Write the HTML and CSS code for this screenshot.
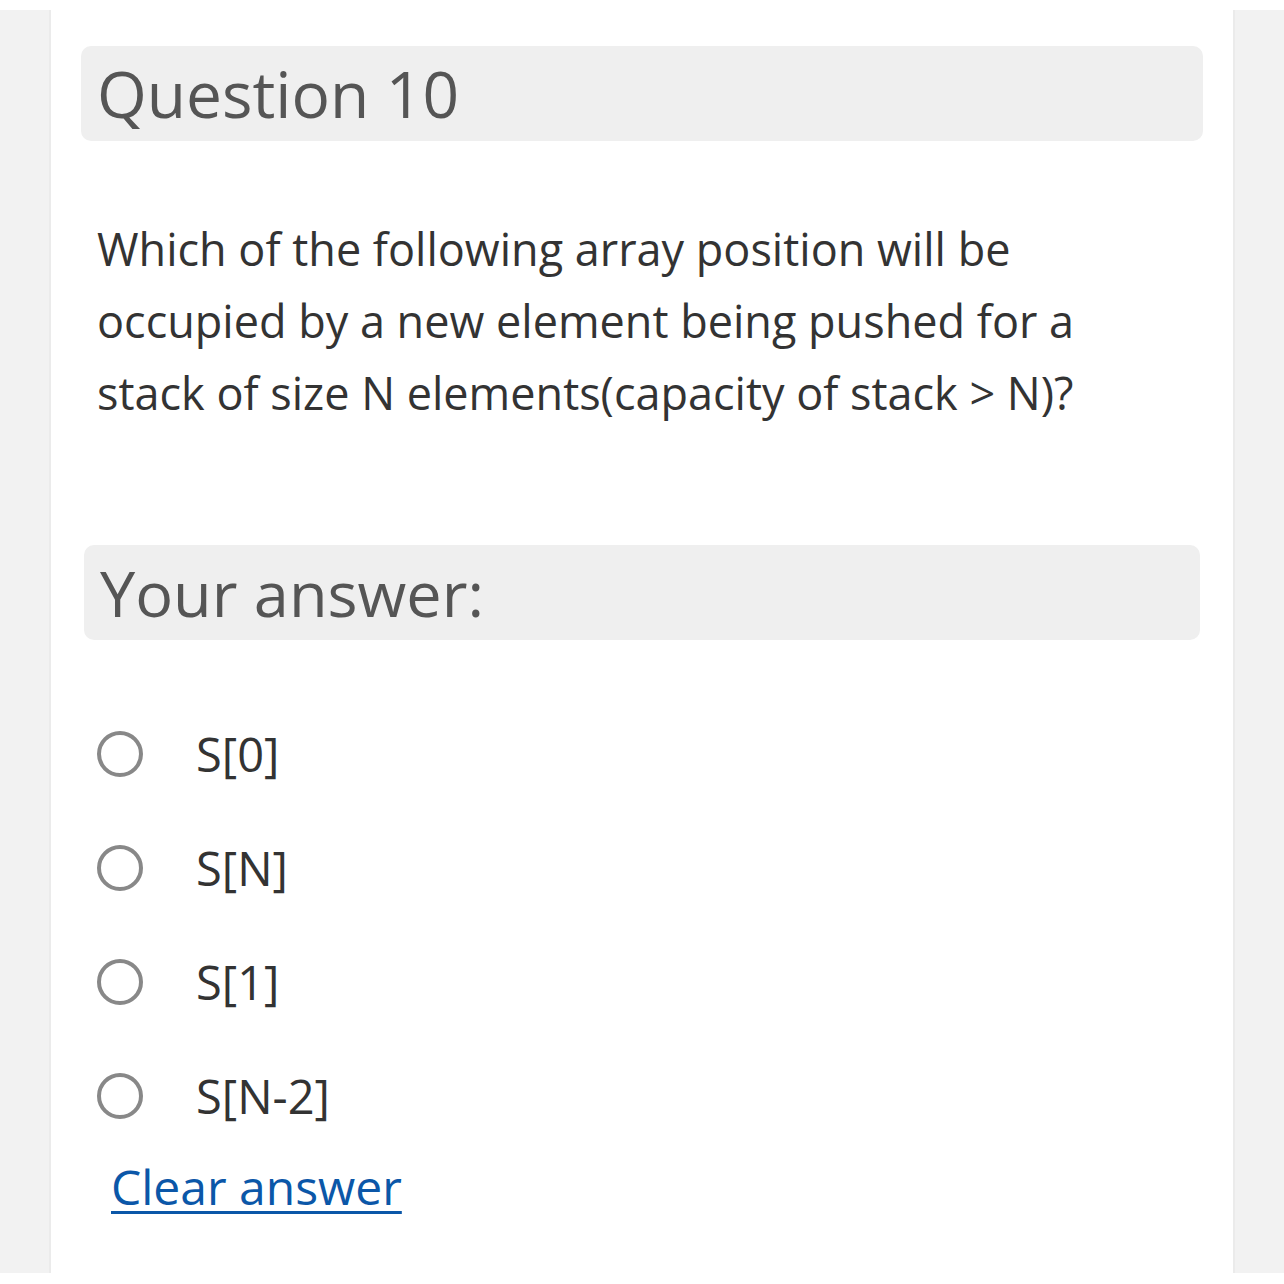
FILE: index.html
```html
<!DOCTYPE html>
<html>
<head>
<meta charset="utf-8">
<link rel="stylesheet" href="styles.css">
</head>
<body>
<div class="page">
  <div class="gutter gutter-left"></div>
  <main class="content">
    <div class="heading-box"><h2 class="heading">Question 10</h2></div>
    <p class="question">Which of the following array position will be occupied by a new element being pushed for a stack of size N elements(capacity of stack &gt; N)?</p>
    <div class="heading-box answer-box"><h3 class="heading">Your answer:</h3></div>
    <ul class="options">
      <li class="option"><span class="radio"></span><span class="label">S[0]</span></li>
      <li class="option"><span class="radio"></span><span class="label">S[N]</span></li>
      <li class="option"><span class="radio"></span><span class="label">S[1]</span></li>
      <li class="option"><span class="radio"></span><span class="label">S[N-2]</span></li>
    </ul>
    <a class="clear" href="#">Clear answer</a>
  </main>
  <div class="gutter gutter-right"></div>
</div>
</body>
</html>
```

FILE: styles.css
```css
* { box-sizing: border-box; }
html, body { margin: 0; padding: 0; background: #ffffff; }
body {
  font-family: "Open Sans", "Noto Sans", sans-serif;
  padding: 10px 0 11px;
}
.page {
  display: flex;
  height: 1263px;
}
.gutter {
  background: #f2f2f2;
}
.gutter-left {
  width: 51px;
  border-right: 2px solid #ebebeb;
}
.gutter-right {
  width: 51px;
  border-left: 2px solid #ebebeb;
}
.content {
  flex: 1;
  padding: 36px 30px 0;
  display: flex;
  flex-direction: column;
}
.heading-box {
  background: #efefef;
  border-radius: 10px;
  height: 95px;
  display: flex;
  align-items: center;
  padding-left: 16px;
}
.heading {
  margin: 0;
  font-weight: 400;
  font-size: 64px;
  color: #555555;
  line-height: 1;
}
.answer-box .heading {
  font-size: 63px;
}
.question {
  margin: 72px 0 0;
  padding: 0 80px 0 16px;
  font-size: 45px;
  line-height: 72px;
  color: #333333;
}
.answer-box {
  margin: 116px 3px 0;
}
.options {
  list-style: none;
  margin: 80px 0 0;
  padding: 0 0 0 16px;
  display: flex;
  flex-direction: column;
  gap: 46px;
}
.option {
  display: flex;
  align-items: center;
  height: 68px;
}
.radio {
  width: 46px;
  height: 46px;
  border-radius: 50%;
  border: 4px solid #888888;
  background: #ffffff;
  flex: none;
}
.label {
  margin-left: 53px;
  font-size: 47px;
  color: #333333;
}
.clear {
  align-self: flex-start;
  margin: 24px 0 0 30px;
  font-size: 48px;
  color: #0b57a8;
  text-decoration: underline;
  text-decoration-thickness: 3px;
  text-underline-offset: 6px;
}
```
